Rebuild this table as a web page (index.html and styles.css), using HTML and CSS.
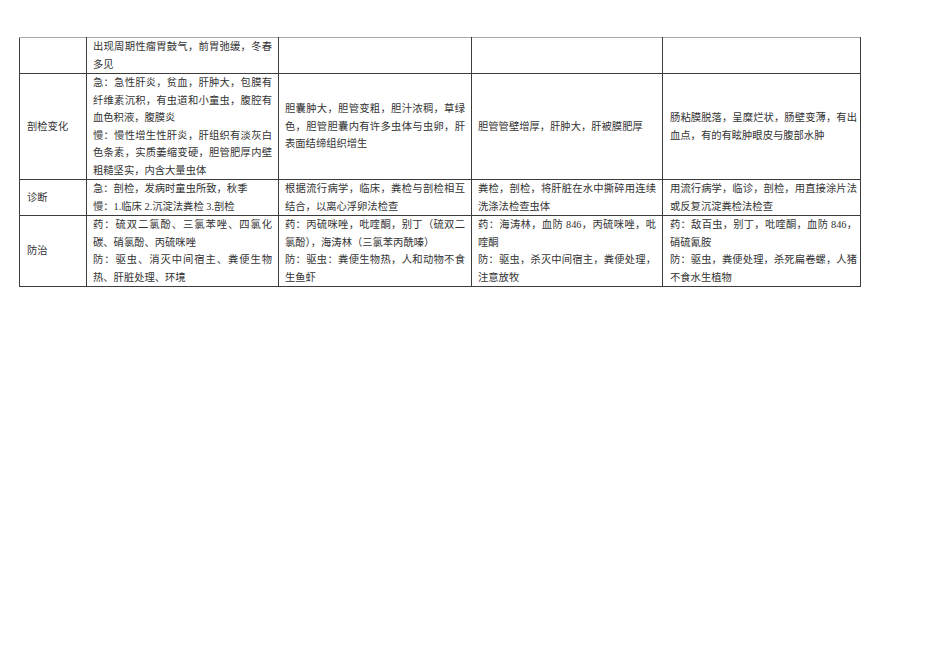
FILE: index.html
```html
<!DOCTYPE html>
<html lang="zh-CN">
<head>
<meta charset="utf-8">
<title>表格</title>
<link rel="stylesheet" href="styles.css">
</head>
<body>
<div class="page">
<table class="grid">
<colgroup>
<col class="c1"><col class="c2"><col class="c3"><col class="c4"><col class="c5">
</colgroup>
<tr class="first">
<td></td>
<td>出现周期性瘤胃鼓气，前胃弛缓，冬春多见</td>
<td></td>
<td></td>
<td class="last"></td>
</tr>
<tr>
<td class="label">剖检变化</td>
<td>急：急性肝炎，贫血，肝肿大，包膜有纤维素沉积，有虫道和小童虫，腹腔有血色积液，腹膜炎<br>慢：慢性增生性肝炎，肝组织有淡灰白色条素，实质萎缩变硬，胆管肥厚内壁粗糙坚实，内含大量虫体</td>
<td>胆囊肿大，胆管变粗，胆汁浓稠，草绿色，胆管胆囊内有许多虫体与虫卵，肝表面结缔组织增生</td>
<td>胆管管壁增厚，肝肿大，肝被膜肥厚</td>
<td class="last">肠粘膜脱落，呈糜烂状，肠壁变薄，有出血点，有的有眩肿眼皮与腹部水肿</td>
</tr>
<tr>
<td class="label">诊断</td>
<td>急：剖检，发病时童虫所致，秋季<br>慢：1.临床 2.沉淀法粪检 3.剖检</td>
<td>根据流行病学，临床，粪检与剖检相互结合，以离心浮卵法检查</td>
<td>粪检，剖检，将肝脏在水中撕碎用连续洗涤法检查虫体</td>
<td class="last">用流行病学，临诊，剖检，用直接涂片法或反复沉淀粪检法检查</td>
</tr>
<tr>
<td class="label">防治</td>
<td>药：硫双二氯酚、三氯苯唑、四氯化碳、硝氯酚、丙硫咪唑<br>防：驱虫、消灭中间宿主、粪便生物热、肝脏处理、环境</td>
<td>药：丙硫咪唑，吡喹酮，别丁（硫双二氯酚），海涛林（三氯苯丙酰嗪）<br>防：驱虫：粪便生物热，人和动物不食生鱼虾</td>
<td>药：海涛林，血防 846，丙硫咪唑，吡喹酮<br>防：驱虫，杀灭中间宿主，粪便处理，注意放牧</td>
<td class="last">药：敌百虫，别丁，吡喹酮，血防 846，硝硫氰胺<br>防：驱虫，粪便处理，杀死扁卷螺，人猪不食水生植物</td>
</tr>
</table>
</div>
</body>
</html>
```
FILE: styles.css
```css
html, body {
  margin: 0;
  padding: 0;
  background: #ffffff;
}
.page {
  padding: 37px 0 0 19px;
}
.grid {
  border-collapse: collapse;
  table-layout: fixed;
  width: 841px;
  font-family: "Liberation Serif", "Noto Sans CJK SC", serif;
  font-size: 10.3px;
  line-height: 17.5px;
  color: #333333;
}
.c1 { width: 67px; }
.c2 { width: 192px; }
.c3 { width: 193px; }
.c4 { width: 191px; }
.c5 { width: 198px; }
.grid td {
  border: 1px solid #3c3c3c;
  padding: 0 6px;
  vertical-align: middle;
  text-align: justify;
  word-break: break-all;
}
.grid td.last {
  padding: 0 3px 0 7px;
}
.grid .first td {
  border-top-color: #a8a8a8;
}
.grid td.label {
  padding-left: 7px;
  text-align: left;
}
```
